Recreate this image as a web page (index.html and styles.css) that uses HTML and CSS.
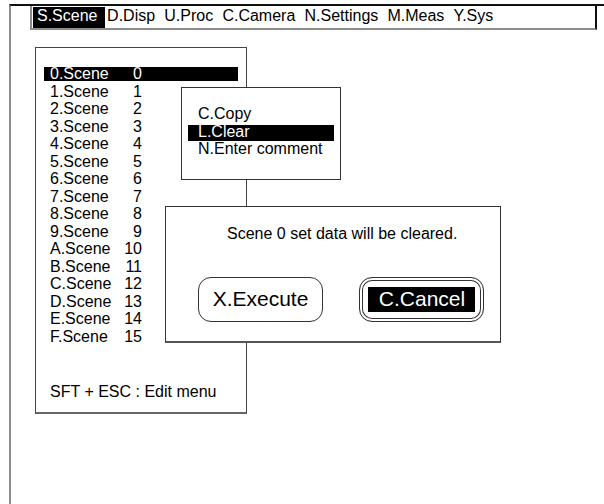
FILE: index.html
```html
<!DOCTYPE html>
<html lang="en">
<head>
  <meta charset="UTF-8">
  <meta name="viewport" content="width=device-width, initial-scale=1.0">
  <title>Scene menu</title>
  <link rel="stylesheet" href="styles.css">
</head>
<body>
  <div class="screen">
    <div class="menubar">
      <span class="menu-item active">S.Scene</span>
      <span class="menu-item">D.Disp</span>
      <span class="menu-item">U.Proc</span>
      <span class="menu-item">C.Camera</span>
      <span class="menu-item">N.Settings</span>
      <span class="menu-item">M.Meas</span>
      <span class="menu-item">Y.Sys</span>
    </div>

    <div class="scene-list">
      <div class="rows">
        <div class="row selected"><span class="name">0.Scene</span><span class="num">0</span></div>
        <div class="row"><span class="name">1.Scene</span><span class="num">1</span></div>
        <div class="row"><span class="name">2.Scene</span><span class="num">2</span></div>
        <div class="row"><span class="name">3.Scene</span><span class="num">3</span></div>
        <div class="row"><span class="name">4.Scene</span><span class="num">4</span></div>
        <div class="row"><span class="name">5.Scene</span><span class="num">5</span></div>
        <div class="row"><span class="name">6.Scene</span><span class="num">6</span></div>
        <div class="row"><span class="name">7.Scene</span><span class="num">7</span></div>
        <div class="row"><span class="name">8.Scene</span><span class="num">8</span></div>
        <div class="row"><span class="name">9.Scene</span><span class="num">9</span></div>
        <div class="row"><span class="name">A.Scene</span><span class="num">10</span></div>
        <div class="row"><span class="name">B.Scene</span><span class="num">11</span></div>
        <div class="row"><span class="name">C.Scene</span><span class="num">12</span></div>
        <div class="row"><span class="name">D.Scene</span><span class="num">13</span></div>
        <div class="row"><span class="name">E.Scene</span><span class="num">14</span></div>
        <div class="row"><span class="name">F.Scene</span><span class="num">15</span></div>
      </div>
      <div class="hint">SFT + ESC : Edit menu</div>
    </div>

    <div class="edit-menu">
      <div class="edit-item">C.Copy</div>
      <div class="edit-item selected">L.Clear</div>
      <div class="edit-item">N.Enter comment</div>
    </div>

    <div class="dialog">
      <p class="message">Scene 0 set data will be cleared.</p>
      <div class="buttons">
        <div class="btn">X.Execute</div>
        <div class="btn focused"><span class="btn-label">C.Cancel</span></div>
      </div>
    </div>
  </div>
</body>
</html>
```

FILE: styles.css
```css
body {
  margin: 0;
  font-family: "Liberation Sans", Arial, sans-serif;
  font-size: 16px;
  color: #000;
  background: #fff;
}
.screen {
  position: relative;
  margin: 4px 0 0 9px;
  height: 500px;
  border-top: 2px solid #111;
  border-left: 2px solid #8c8c8c;
}
.menubar {
  display: flex;
  margin-left: 19px;
  width: 562px;
  padding: 1px 0 0 1px;
  border-left: 2px solid #8c8c8c;
  border-right: 2px solid #111;
  border-bottom: 2px solid #8c8c8c;
}
.menu-item {
  padding: 0 4.6px 3px;
  line-height: 18px;
}
.menu-item.active {
  background: #000;
  color: #fff;
  padding-left: 4px;
  padding-right: 8px;
  margin-right: -3px;
}
.scene-list {
  box-sizing: border-box;
  width: 212px;
  height: 367px;
  margin: 17px 0 0 24px;
  padding: 19px 8px 0;
  border: 1px solid #444;
  border-bottom: 2px solid #666;
}
.rows {
  display: flex;
  flex-direction: column;
  gap: 3.5px;
}
.row {
  display: flex;
  height: 14px;
  line-height: 14px;
  padding-left: 6px;
}
.row.selected {
  background: #000;
  color: #fff;
}
.name {
  width: 72px;
}
.num {
  width: 20px;
  text-align: right;
}
.hint {
  margin-top: 41px;
  padding-left: 6px;
  line-height: 14px;
}
.edit-menu {
  position: absolute;
  left: 170px;
  top: 81px;
  box-sizing: border-box;
  width: 160px;
  height: 93px;
  padding: 19px 6px 0;
  border: 1px solid #333;
  background: #fff;
  display: flex;
  flex-direction: column;
  gap: 1.6px;
}
.edit-item {
  height: 16px;
  line-height: 14px;
  padding-left: 10px;
}
.edit-item.selected {
  background: #000;
  color: #fff;
}
.dialog {
  position: absolute;
  left: 154px;
  top: 200px;
  box-sizing: border-box;
  width: 336px;
  height: 137px;
  padding: 18px 0 0 32px;
  border: 1px solid #333;
  border-bottom: 2px solid #555;
  background: #fff;
}
.message {
  margin: 0 0 34px 29px;
  line-height: 18px;
}
.buttons {
  display: flex;
  gap: 36px;
}
.btn {
  box-sizing: border-box;
  width: 125px;
  height: 45px;
  border: 1px solid #333;
  border-radius: 13px;
  display: flex;
  align-items: center;
  justify-content: center;
  font-size: 21px;
  line-height: 24.5px;
}
.btn.focused {
  box-shadow: inset 0 0 0 2px #fff, inset 0 0 0 3px #333;
}
.btn-label {
  background: #000;
  color: #fff;
  padding: 0 10px 0 11px;
}
```
